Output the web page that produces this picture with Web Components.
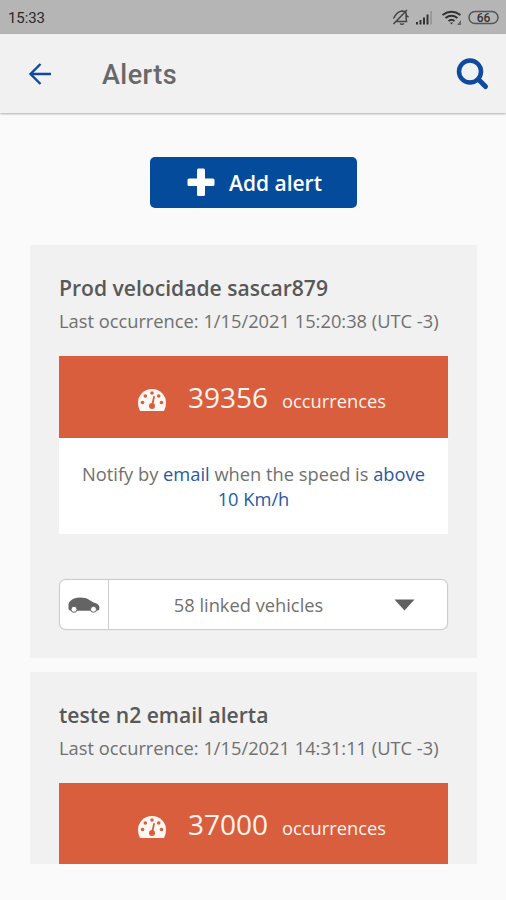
<!DOCTYPE html>
<html lang="en">
<head>
<meta charset="utf-8">
<title>Alerts</title>
<style>
html,body{margin:0;height:100%;background:#fafafa}
body{font-family:"Open Sans","Noto Sans",sans-serif;color:#707070;overflow:hidden}
</style>
</head>
<body>
<alerts-screen></alerts-screen>
<script>
const define = (name, html) => {
  const template = document.createElement('template');
  template.innerHTML = html;
  customElements.define(name, class extends HTMLElement {
    constructor() {
      super();
      this.attachShadow({mode: 'open'}).append(template.content.cloneNode(true));
    }
  });
};

define('status-bar', `
<style>
:host{display:flex;box-sizing:border-box;height:34px;background:#b5b5b5;align-items:center;padding:1px 6px 0 8px;font:15px Roboto,sans-serif;color:#292929}
time{flex:1;letter-spacing:-.1px}
svg{display:block}
</style>
<time>15:33</time>
<svg width="108" height="24" viewBox="0 0 108 24" fill="none" stroke="#444" stroke-width="1.500">
  <path d="M1.500 12.500q3.500-7 8.500-7.500l3 .5q2 2 1 5.500l.5 4.500H4.500M8 17.500q2 1.500 4 0M14 9.500l2.500 1.500M1.500 18L15 4"/>
  <g stroke="none" fill="#333"><path d="M24 16h2v2.500h-2zM27.500 14h2v4.500h-2zM31 11.500h2v7h-2zM34.500 8.500h2v10h-2z"/><path d="M38 5h2v13.500h-2z" fill="#999"/></g>
  <g stroke="#303030" stroke-width="2"><path d="M50.500 9q9-6.500 18 0M53.500 12q6-4.500 12 0M56.500 15q3-2.500 6 0"/><path d="M58 16.500h3l-1.500 2z" fill="#303030" stroke="none"/><path d="M69 14v5h-4z" fill="#666" stroke="none"/></g>
  <rect x="77" y="5.500" width="29" height="12" rx="6" stroke="#555"/>
  <text x="91.500" y="15.900" text-anchor="middle" font-family="Roboto,sans-serif" font-weight="500" font-size="12" fill="#333" stroke="none">66</text>
</svg>`);

define('app-header', `
<style>
:host{display:flex;box-sizing:border-box;height:79px;background:#f1f1f1;align-items:center;padding:0 16px 0 27px;box-shadow:0 1px 2px #0000004d;position:relative}
h1{flex:1;margin:3px 0 0 49px;font:500 27px/32px Roboto,sans-serif;letter-spacing:.45px;color:#686868}
svg{display:block}
</style>
<svg width="26" height="26" viewBox="0 0 26 26" fill="none" stroke="#104a9f" stroke-width="2.400"><path d="M24 13H3M13.500 3l-10 10 10 10"/></svg>
<h1><slot></slot></h1>
<svg width="34" height="34" viewBox="0 0 34 34" fill="none" stroke="#104a9f"><circle cx="14" cy="14.500" r="11" stroke-width="4.500"/><path d="M22.500 22.500l7 7" stroke-width="5" stroke-linecap="round"/></svg>`);

define('add-button', `
<style>
:host{display:block}
button{display:flex;width:207px;height:51px;border:0;border-radius:5px;background:#044c9b;color:#fff;align-items:center;justify-content:center;gap:14px;padding:0 0 2px 3px;font:600 21px/30px "Open Sans",sans-serif}
span{padding-top:2px}
</style>
<button><svg width="28" height="28" viewBox="0 0 28 28" fill="#fff"><path d="M11.500.500h5q1.500 0 1.500 1.500v8.500h8q1.500 0 1.500 1.500v4.500q0 1.500-1.500 1.500h-8v8.500q0 1.500-1.500 1.500h-5q-1.500 0-1.500-1.500V18H2q-1.500 0-1.500-1.500V12q0-1.500 1.500-1.500h8V2q0-1.500 1.500-1.500z"/></svg><span><slot></slot></span></button>`);

define('occurrence-banner', `
<style>
:host{display:flex;height:82px;background:#d85e3e;color:#fff4ee;align-items:center;box-sizing:border-box;padding-left:78px}
svg{margin-top:6px}
.n{font-size:28px;line-height:38px;margin:0 14px 0 21.500px}
.t{font-size:18.300px;line-height:26px;margin-top:7px}
</style>
<svg width="30" height="24" viewBox="0 0 30 24"><path d="M3 23q-2-3.500-2-8a14 14 0 0 1 28 0q0 4.500-2 8z" fill="#fff8f2"/><g fill="#d85e3e"><circle cx="5.500" cy="14.500" r="1.800"/><circle cx="8.300" cy="8" r="1.800"/><circle cx="15" cy="5" r="1.800"/><circle cx="21.700" cy="8" r="1.800"/><circle cx="24.500" cy="14.500" r="1.800"/><circle cx="15" cy="18" r="3"/></g><path d="M15 18l2-9" stroke="#d85e3e" stroke-width="1.800" stroke-linecap="round"/></svg>
<span class="n"><slot></slot></span><span class="t">occurrences</span>`);

define('alert-rule', `
<style>
:host{display:block;box-sizing:border-box;height:96px;background:#fff;padding:23px 15px 0 16px;text-align:center;font-size:18.300px;line-height:25px}
::slotted(b){font-weight:400;color:#2859a0}
</style><slot></slot>`);

define('vehicle-select', `
<style>
:host{display:flex;box-sizing:border-box;height:51px;margin-top:45px;border:1.500px solid #ccc;border-radius:7px;background:#fff;align-items:center;font-size:18.300px;box-shadow:0 0 1px #ccc}
.car{width:49px;box-sizing:border-box;height:100%;border-right:1px solid #ccc;display:grid;place-items:center}
.label{flex:1;text-align:center;padding-left:15px}
.caret{width:73px;display:block}
</style>
<span class="car"><svg width="32" height="18" viewBox="0 0 32 18"><path d="M.5 13V8Q1 5.500 3.500 4Q6 1.500 12 1.500q6 0 9 2.200L25.500 6.500q5.500 1 6 5l-.5 2.500q-1 .8-3 .8H3q-2 0-2.500-1.800z" fill="#646464"/><g fill="#fff" stroke="#646464" stroke-width="1"><circle cx="6" cy="13.300" r="3"/><circle cx="25.500" cy="13.300" r="3"/></g></svg></span>
<span class="label"><slot></slot></span>
<svg class="caret" width="73" height="14" viewBox="0 0 73 14"><path d="M20.500 1.500h20L30.500 12.500z" fill="#606060"/></svg>`);

define('alert-card', `
<style>
:host{display:block;box-sizing:border-box;height:413px;background:#f1f1f1;padding:29px 29px 0}
h2{margin:0 0 0 .5px;font-size:21.100px;line-height:28px;font-weight:600;color:#585858;white-space:nowrap}
p{margin:6px 0 22px .5px;font-size:18.300px;line-height:26px;white-space:nowrap}
</style>
<h2><slot name="title"></slot></h2><p><slot name="time"></slot></p><slot></slot>`);

define('alerts-screen', `
<style>
:host{display:flex;flex-direction:column;height:900px;width:506px}
main{display:flex;flex-direction:column;align-items:center;height:751px;padding-top:44px;box-sizing:border-box;overflow:hidden}
section{display:flex;flex-direction:column;gap:14px;width:447px;margin-top:37px}
alert-card{flex:none}
</style>
<status-bar></status-bar>
<app-header>Alerts</app-header>
<main>
  <add-button>Add alert</add-button>
  <section>
    <alert-card>
      <span slot="title">Prod velocidade sascar879</span>
      <span slot="time">Last occurrence: 1/15/2021 15:20:38 (UTC -3)</span>
      <occurrence-banner>39356</occurrence-banner>
      <alert-rule>Notify by <b>email</b> when the speed is <b>above<br>10 Km/h</b></alert-rule>
      <vehicle-select>58 linked vehicles</vehicle-select>
    </alert-card>
    <alert-card>
      <span slot="title">teste n2 email alerta</span>
      <span slot="time">Last occurrence: 1/15/2021 14:31:11 (UTC -3)</span>
      <occurrence-banner>37000</occurrence-banner>
    </alert-card>
  </section>
</main>`);
</script>
</body>
</html>
